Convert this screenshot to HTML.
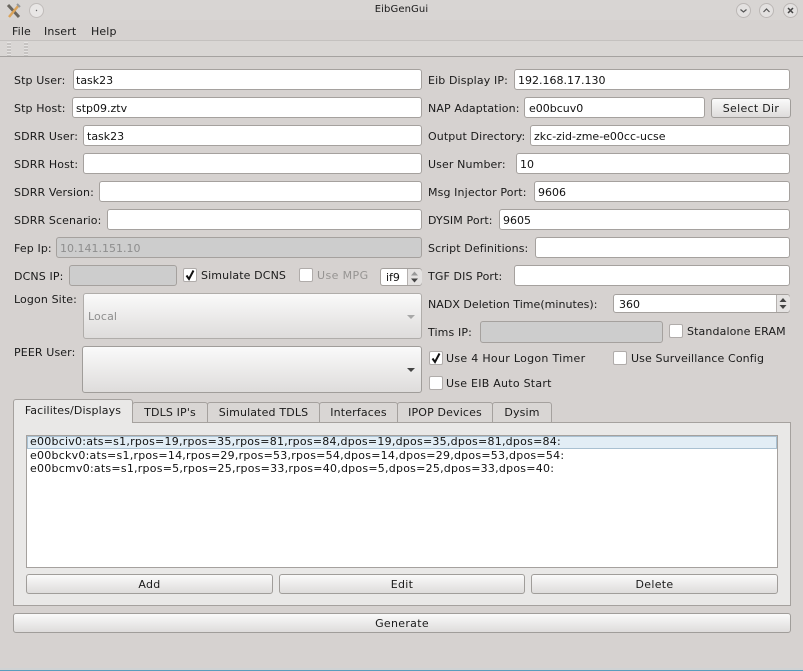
<!DOCTYPE html>
<html><head><meta charset="utf-8"><style>
html,body{margin:0;padding:0;width:803px;height:671px;overflow:hidden;background:#d6d2d0;}
body{position:relative;font-family:"DejaVu Sans",sans-serif;font-size:11px;color:#1a1a1a;}
.t{position:absolute;white-space:pre;line-height:14px;height:14px;letter-spacing:.12px;margin-top:1px;}
.i{position:absolute;box-sizing:border-box;background:#fff;border:1px solid #a5a19e;border-radius:3px;height:21px;line-height:21px;padding-left:3px;white-space:pre;letter-spacing:0;color:#111;}
.d{background:#cdcdcd;color:#8e8e8e;}
.b{position:absolute;box-sizing:border-box;border:1px solid #a09d9a;border-radius:3px;background:linear-gradient(#fafafa,#dedcdb);text-align:center;white-space:pre;letter-spacing:.3px;}
.c{position:absolute;box-sizing:border-box;width:14px;height:14px;background:#fff;border:1px solid #b0acaa;border-radius:2px;}
.tab{position:absolute;box-sizing:border-box;top:402px;height:21px;background:#d9d6d4;border:1px solid #a5a19e;border-radius:3px 3px 0 0;text-align:center;line-height:19px;letter-spacing:.15px;}
.r{position:absolute;left:30px;white-space:pre;line-height:14px;letter-spacing:.24px;color:#111;}
svg{position:absolute;overflow:visible}
</style></head><body>
<div style="position:absolute;left:0;top:0;width:803px;height:20px;background:#d8d5d3"></div>
<svg style="left:6px;top:3px" width="16" height="16" viewBox="0 0 16 16"><path d="M2 2L13 14" stroke="#6a665f" stroke-width="3"/><path d="M13 2L3 14" stroke="#dba45a" stroke-width="2.5"/><path d="M11 1L14 4" stroke="#999" stroke-width="2"/></svg>
<svg style="left:29px;top:3px" width="15" height="15"><circle cx="7.5" cy="7.5" r="7" fill="#e8e6e5" stroke="#c0bcba"/><circle cx="7.5" cy="7.5" r=".7" fill="#666"/></svg>
<div class="t" style="left:0;width:803px;text-align:center;top:2px;font-size:10px;letter-spacing:.1px">EibGenGui</div>
<svg style="left:736px;top:3px" width="15" height="15"><circle cx="7.5" cy="7.5" r="7" fill="#e3e1e0" stroke="#bbb7b5"/><path d="M4.5 6.5L7.5 9L10.5 6.5" fill="none" stroke="#555" stroke-width="1.2"/></svg>
<svg style="left:759px;top:3px" width="15" height="15"><circle cx="7.5" cy="7.5" r="7" fill="#e3e1e0" stroke="#bbb7b5"/><path d="M4.5 9L7.5 6L10.5 9" fill="none" stroke="#555" stroke-width="1.2"/></svg>
<svg style="left:783px;top:3px" width="15" height="15"><circle cx="7.5" cy="7.5" r="7" fill="#e3e1e0" stroke="#bbb7b5"/><path d="M5 5L10 10M10 5L5 10" fill="none" stroke="#444" stroke-width="1.5"/></svg>

<div class="t" style="left:12px;top:24px">File</div>
<div class="t" style="left:44px;top:24px">Insert</div>
<div class="t" style="left:91px;top:24px">Help</div>
<div style="position:absolute;left:0;top:40px;width:803px;height:17px;box-sizing:border-box;background:#d9d6d4;border-top:1px solid #c4c1bf;border-bottom:1px solid #a5a2a0"></div>
<div style="position:absolute;left:7px;top:42px;width:4px;height:14px;background:repeating-linear-gradient(#e6e4e3 0 1px,#c6c3c1 1px 3px)"></div>
<div style="position:absolute;left:24px;top:42px;width:4px;height:14px;background:repeating-linear-gradient(#e6e4e3 0 1px,#c6c3c1 1px 3px)"></div>

<div class="t" style="left:14px;top:73px">Stp User:</div><div class="i" style="left:73px;top:69px;width:349px;padding-left:2px">task23</div>
<div class="t" style="left:14px;top:101px">Stp Host:</div><div class="i" style="left:72px;top:97px;width:350px">stp09.ztv</div>
<div class="t" style="left:14px;top:129px">SDRR User:</div><div class="i" style="left:83px;top:125px;width:339px">task23</div>
<div class="t" style="left:14px;top:157px">SDRR Host:</div><div class="i" style="left:83px;top:153px;width:339px"></div>
<div class="t" style="left:14px;top:185px">SDRR Version:</div><div class="i" style="left:99px;top:181px;width:323px"></div>
<div class="t" style="left:14px;top:213px">SDRR Scenario:</div><div class="i" style="left:107px;top:209px;width:315px"></div>
<div class="t" style="left:14px;top:241px">Fep Ip:</div><div class="i d" style="left:56px;top:237px;width:366px">10.141.151.10</div>
<div class="t" style="left:14px;top:269px">DCNS IP:</div><div class="i d" style="left:69px;top:265px;width:108px"></div>
<div class="c" style="left:183px;top:268px"></div>
<svg style="left:183px;top:268px" width="14" height="14"><path d="M3.5 7.5L6 11L10.5 2.5" fill="none" stroke="#111" stroke-width="2"/></svg>
<div class="t" style="left:201px;top:268px">Simulate DCNS</div>
<div class="c" style="left:299px;top:268px"></div>
<div class="t" style="left:317px;top:268px;color:#969492;letter-spacing:.4px">Use MPG</div>
<div class="i" style="left:380px;top:268px;width:42px;height:18px;line-height:18px;padding-left:5px">if9</div>
<div style="position:absolute;left:407px;top:269px;width:14px;height:16px;background:#e4e2e1;border-left:1px solid #b5b1af;border-radius:0 3px 3px 0"></div>
<svg style="left:408px;top:270px" width="13" height="15"><path d="M3 5.5L6.5 1.5L10 5.5Z" fill="#9a9a9a"/><path d="M3 8.5L6.5 12.5L10 8.5Z" fill="#444"/></svg>
<div class="t" style="left:14px;top:292px">Logon Site:</div>
<div class="b" style="left:83px;top:293px;width:339px;height:46px;border-color:#b0adaa"></div>
<div class="t" style="left:88px;top:309px;color:#8e8e8e">Local</div>
<svg style="left:406px;top:314px" width="10" height="6"><path d="M1 1H9L5 5Z" fill="#a8a8a8"/></svg>
<div class="t" style="left:14px;top:345px">PEER User:</div>
<div class="b" style="left:82px;top:346px;width:340px;height:47px"></div>
<svg style="left:406px;top:367px" width="10" height="6"><path d="M1 1H9L5 5Z" fill="#444"/></svg>

<div class="t" style="left:428px;top:73px">Eib Display IP:</div><div class="i" style="left:514px;top:69px;width:276px">192.168.17.130</div>
<div class="t" style="left:428px;top:101px">NAP Adaptation:</div><div class="i" style="left:524px;top:97px;width:181px;padding-left:4px">e00bcuv0</div>
<div class="b" style="left:711px;top:98px;width:80px;height:20px;line-height:20px">Select Dir</div>
<div class="t" style="left:428px;top:129px">Output Directory:</div><div class="i" style="left:530px;top:125px;width:260px">zkc-zid-zme-e00cc-ucse</div>
<div class="t" style="left:428px;top:157px">User Number:</div><div class="i" style="left:516px;top:153px;width:274px">10</div>
<div class="t" style="left:428px;top:185px">Msg Injector Port:</div><div class="i" style="left:534px;top:181px;width:256px">9606</div>
<div class="t" style="left:428px;top:213px">DYSIM Port:</div><div class="i" style="left:499px;top:209px;width:291px">9605</div>
<div class="t" style="left:428px;top:241px">Script Definitions:</div><div class="i" style="left:535px;top:237px;width:255px"></div>
<div class="t" style="left:428px;top:269px">TGF DIS Port:</div><div class="i" style="left:514px;top:265px;width:276px"></div>
<div class="t" style="left:428px;top:297px;letter-spacing:.03px">NADX Deletion Time(minutes):</div>
<div class="i" style="left:613px;top:294px;width:177px;height:19px;line-height:19px;padding-left:5px">360</div>
<div style="position:absolute;left:776px;top:295px;width:13px;height:17px;background:#e4e2e1;border-left:1px solid #b5b1af;border-radius:0 3px 3px 0"></div>
<svg style="left:777px;top:296px" width="12" height="15"><path d="M2.5 6L6 2L9.5 6Z" fill="#444"/><path d="M2.5 9L6 13L9.5 9Z" fill="#444"/></svg>
<div class="t" style="left:428px;top:325px">Tims IP:</div><div class="i d" style="left:480px;top:321px;width:183px;height:22px"></div>
<div class="c" style="left:669px;top:324px"></div><div class="t" style="left:687px;top:324px">Standalone ERAM</div>
<div class="c" style="left:429px;top:351px"></div>
<svg style="left:429px;top:351px" width="14" height="14"><path d="M3.5 7.5L6 11L10.5 2.5" fill="none" stroke="#111" stroke-width="2"/></svg>
<div class="t" style="left:446px;top:351px;letter-spacing:.3px">Use 4 Hour Logon Timer</div>
<div class="c" style="left:613px;top:351px"></div><div class="t" style="left:631px;top:351px">Use Surveillance Config</div>
<div class="c" style="left:429px;top:376px"></div><div class="t" style="left:446px;top:376px;letter-spacing:.25px">Use EIB Auto Start</div>

<div style="position:absolute;box-sizing:border-box;left:13px;top:422px;width:778px;height:184px;background:#e9e8e7;border:1px solid #a5a19e"></div>
<div class="tab" style="left:132px;width:76px">TDLS IP's</div>
<div class="tab" style="left:207px;width:113px">Simulated TDLS</div>
<div class="tab" style="left:319px;width:79px">Interfaces</div>
<div class="tab" style="left:397px;width:96px">IPOP Devices</div>
<div class="tab" style="left:492px;width:60px">Dysim</div>
<div style="position:absolute;box-sizing:border-box;left:13px;top:399px;width:120px;height:24px;background:#e9e8e7;border:1px solid #a5a19e;border-bottom:none;border-radius:3px 3px 0 0;text-align:center;line-height:22px;letter-spacing:.12px">Facilites/Displays</div>

<div style="position:absolute;box-sizing:border-box;left:26px;top:435px;width:752px;height:133px;background:#fff;border:1px solid #a5a19e"></div>
<div style="position:absolute;box-sizing:border-box;left:27px;top:436px;width:750px;height:13px;background:#e2edf5;border:1px solid #a9c0d1"></div>
<div class="r" style="top:435px">e00bciv0:ats=s1,rpos=19,rpos=35,rpos=81,rpos=84,dpos=19,dpos=35,dpos=81,dpos=84:</div>
<div class="r" style="top:449px">e00bckv0:ats=s1,rpos=14,rpos=29,rpos=53,rpos=54,dpos=14,dpos=29,dpos=53,dpos=54:</div>
<div class="r" style="top:462px">e00bcmv0:ats=s1,rpos=5,rpos=25,rpos=33,rpos=40,dpos=5,dpos=25,dpos=33,dpos=40:</div>

<div class="b" style="left:26px;top:574px;width:247px;height:20px;line-height:20px">Add</div>
<div class="b" style="left:279px;top:574px;width:246px;height:20px;line-height:20px">Edit</div>
<div class="b" style="left:531px;top:574px;width:247px;height:20px;line-height:20px">Delete</div>
<div class="b" style="left:13px;top:613px;width:778px;height:20px;line-height:20px">Generate</div>
<div style="position:absolute;left:0;top:670px;width:803px;height:1px;background:#5a9dbd"></div>
<div style="position:absolute;left:0;top:668px;width:803px;height:2px;background:#d0d3d4"></div>
</body></html>
